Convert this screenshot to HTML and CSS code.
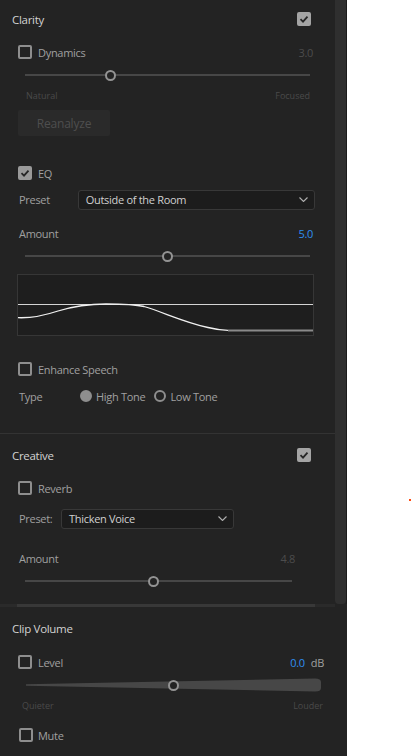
FILE: index.html
```html
<!DOCTYPE html>
<html>
<head>
<meta charset="utf-8">
<link rel="stylesheet" href="styles.css">
</head>
<body>
<div class="app">
  <div class="top">
    <div class="content">
      <section class="sec clarity">
        <div class="sec-head">
          <span class="sec-title">Clarity</span>
          <span class="cb cb-on"><svg viewBox="0 0 14 14"><polyline points="3.5,7.2 6,9.6 10.5,4.6"/></svg></span>
        </div>
        <div class="row check-row">
          <span class="cb"></span><span class="lbl">Dynamics</span><span class="val dim">3.0</span>
        </div>
        <div class="slider s-dyn"><div class="track"></div><div class="thumb" style="left:85px"></div></div>
        <div class="range-labels r-dyn"><span>Natural</span><span>Focused</span></div>
        <div class="btn-row"><button class="btn">Reanalyze</button></div>

        <div class="row check-row eq-row">
          <span class="cb cb-on cb-mid"><svg viewBox="0 0 14 14"><polyline points="3.5,7.2 6,9.6 10.5,4.6"/></svg></span><span class="lbl">EQ</span>
        </div>
        <div class="row preset-row">
          <span class="lbl plabel">Preset</span>
          <div class="select sel-eq"><span>Outside of the Room</span><svg class="chev" viewBox="0 0 9 5"><polyline points="0.5,0.5 4.5,4.5 8.5,0.5"/></svg></div>
        </div>
        <div class="row amount-row">
          <span class="lbl">Amount</span><span class="val blue">5.0</span>
        </div>
        <div class="slider s-eq"><div class="track"></div><div class="thumb" style="left:142px"></div></div>
        <div class="graph">
          <svg viewBox="0 0 295 60" width="295" height="60">
            <line x1="0" y1="29.5" x2="295" y2="29.5" class="gline"/>
            <path d="M0 42.7 C 12 43.2, 22 42, 40 36 C 58 30.5, 70 29, 88 29 C 105 29, 115 29, 126 31.5 C 145 37, 165 47, 190 52.5 C 198 54.5, 204 55.2, 210 55.3" class="gcurve"/>
            <line x1="210" y1="55.4" x2="295" y2="55.6" class="gflat"/>
          </svg>
        </div>
        <div class="row check-row enh-row">
          <span class="cb"></span><span class="lbl">Enhance Speech</span>
        </div>
        <div class="row type-row">
          <span class="lbl tlabel">Type</span>
          <span class="radio radio-on"></span><span class="lbl rl">High Tone</span>
          <span class="radio"></span><span class="lbl rl">Low Tone</span>
        </div>
      </section>

      <section class="sec creative">
        <div class="sec-head">
          <span class="sec-title">Creative</span>
          <span class="cb cb-on"><svg viewBox="0 0 14 14"><polyline points="3.5,7.2 6,9.6 10.5,4.6"/></svg></span>
        </div>
        <div class="row check-row">
          <span class="cb"></span><span class="lbl">Reverb</span>
        </div>
        <div class="row preset-row rv-preset">
          <span class="lbl plabel2">Preset:</span>
          <div class="select sel-rv"><span>Thicken Voice</span><svg class="chev" viewBox="0 0 9 5"><polyline points="0.5,0.5 4.5,4.5 8.5,0.5"/></svg></div>
        </div>
        <div class="row amount-row rv-amount">
          <span class="lbl">Amount</span><span class="val dim">4.8</span>
        </div>
        <div class="slider s-rv"><div class="track"></div><div class="thumb" style="left:128px"></div></div>
      </section>
    </div>
    <div class="vscroll"><div class="vthumb"></div></div>
  </div>
  <div class="hbar"><div class="hthumb"></div></div>
  <section class="sec clip">
    <div class="sec-head">
      <span class="sec-title">Clip Volume</span>
    </div>
    <div class="row check-row lvl-row">
      <span class="cb"></span><span class="lbl">Level</span><span class="val blue">0.0</span><span class="unit">dB</span>
    </div>
    <div class="vol">
      <svg viewBox="0 0 296 14" width="296" height="14"><path d="M0 6.2 L289 0.5 Q295 0.5 295 4 L295 10 Q295 13.5 289 13.5 L0 7.8 Z" class="wedge"/></svg>
      <div class="thumb" style="left:147px"></div>
    </div>
    <div class="range-labels r-vol"><span>Quieter</span><span>Louder</span></div>
    <div class="row check-row mute-row">
      <span class="cb"></span><span class="lbl">Mute</span>
    </div>
  </section>
</div>
<div class="dot"></div>
</body>
</html>
```
FILE: styles.css
```css
* { box-sizing: border-box; }
html, body { margin: 0; padding: 0; background: #ffffff; }
body { font-family: "Open Sans", "Noto Sans", sans-serif; font-size: 11px; letter-spacing: -0.3px; color: #a0a0a0; position: relative; width: 413px; height: 756px; overflow: hidden; }

.app { width: 347px; height: 756px; background: #232323; display: flex; flex-direction: column; }
.top { display: flex; height: 604px; }
.content { width: 335px; overflow: hidden; }
.vscroll { width: 12px; border-right: 1px solid #1b1b1b; display: flex; }
.vthumb { width: 11px; height: 100%; background: #2f2f2f; border-radius: 0 0 4px 4px; }
.hbar { height: 3px; background: #2a2a2a; padding: 0 20px 0 17px; margin-right: 12px; }
.hthumb { height: 100%; background: #383838; }

.sec-head { display: flex; align-items: center; justify-content: space-between; height: 38px; padding: 0 24px 0 12px; }
.sec-title { color: #d2d2d2; font-size: 11.5px; }

.row { display: flex; align-items: center; }
.check-row { height: 28px; padding: 0 22px 0 18px; }
.lbl { color: #a0a0a0; white-space: nowrap; }
.check-row .lbl { margin-left: 6px; }
.val { margin-left: auto; }
.dim { color: #4c4c4c; }
.blue { color: #2f8ff0; }

.cb { width: 14px; height: 14px; border: 2px solid #8e8e8e; border-radius: 2px; display: inline-flex; flex: none; }
.cb-on { background: #a4a4a4; border-color: #a4a4a4; }
.cb-mid { background: #9a9a9a; border-color: #9a9a9a; }
.cb svg { width: 14px; height: 14px; margin: -2px; fill: none; stroke: #262626; stroke-width: 1.8; }

.slider { position: relative; height: 16px; margin: 0 25px; }
.slider .track { position: absolute; left: 0; right: 0; top: 7px; height: 2px; background: #474747; }
.thumb { position: absolute; top: 3px; width: 11px; height: 11px; margin-left: -5.5px; border: 2px solid #939393; border-radius: 50%; background: #232323; }
.slider .thumb { top: 2.5px; }
.s-dyn { width: 285px; margin-top: 1px; }
.s-eq { width: 285px; margin-top: 3px; }
.s-rv { width: 267px; margin-top: 3px; }

.range-labels { display: flex; justify-content: space-between; align-items: center; height: 24px; font-size: 9px; letter-spacing: 0; color: #4a4a4a; }
.r-dyn { margin: 0 25px 0 26px; }
.r-vol { margin: 0 24px 0 22px; }

.btn-row { padding: 3px 0 0 18px; }
.btn { width: 92px; height: 26px; border: none; border-radius: 2px; background: #2a2a2a; color: #4e4e4e; font-family: inherit; font-size: 12px; letter-spacing: -0.2px; padding: 0; }

.eq-row { margin-top: 23px; }
.preset-row { height: 21px; margin-top: 2px; padding: 0 20px 0 19px; }
.plabel { width: 59px; }
.select { display: flex; align-items: center; justify-content: space-between; height: 20px; background: #1c1c1c; border: 1px solid #383838; border-radius: 3px; padding: 0 6px 0 7px; color: #d0d0d0; }
.sel-eq { width: 238px; }
.chev { width: 9px; height: 5px; fill: none; stroke: #b0b0b0; stroke-width: 1.1; }
.amount-row { height: 24px; margin-top: 11px; padding: 0 22px 0 19px; }

.graph { width: 297px; height: 62px; margin: 10px 0 0 17px; background: #1e1e1e; border: 1px solid #363636; }
.graph svg { display: block; }
.gline { stroke: #d4d4d4; stroke-width: 1; }
.gcurve { stroke: #f0f0f0; stroke-width: 1.3; fill: none; }
.gflat { stroke: #8a8a8a; stroke-width: 2; }

.enh-row { margin-top: 19px; }
.type-row { height: 24px; margin-top: 1px; padding-left: 19px; }
.tlabel { width: 61px; }
.radio { width: 12px; height: 12px; border: 2px solid #8e8e8e; border-radius: 50%; flex: none; }
.radio-on { background: #8e8e8e; }
.rl { margin: 0 9px 0 4px; }

.clarity { height: 434px; border-bottom: 1px solid #333333; }
.creative .sec-head { height: 40px; padding-top: 2px; }
.rv-preset { margin-top: 6px; }
.plabel2 { width: 42px; }
.sel-rv { width: 173px; }
.rv-amount { margin-top: 17px; padding-right: 40px; }

.clip .sec-head { height: 41px; padding-top: 2px; }
.lvl-row { padding-right: 23px; }
.unit { margin-left: 6px; color: #a0a0a0; }
.vol { position: relative; height: 16px; margin: 1px 0 0 26px; width: 296px; }
.vol svg { position: absolute; left: 0; top: 1px; }
.wedge { fill: #474747; }
.vol .thumb { top: 2.5px; }
.mute-row { margin-top: 4px; padding-left: 19px; }
.mute-row .lbl { margin-left: 5px; }

.dot { position: absolute; left: 409px; top: 499px; width: 2px; height: 2px; background: #ff4a10; }
```
